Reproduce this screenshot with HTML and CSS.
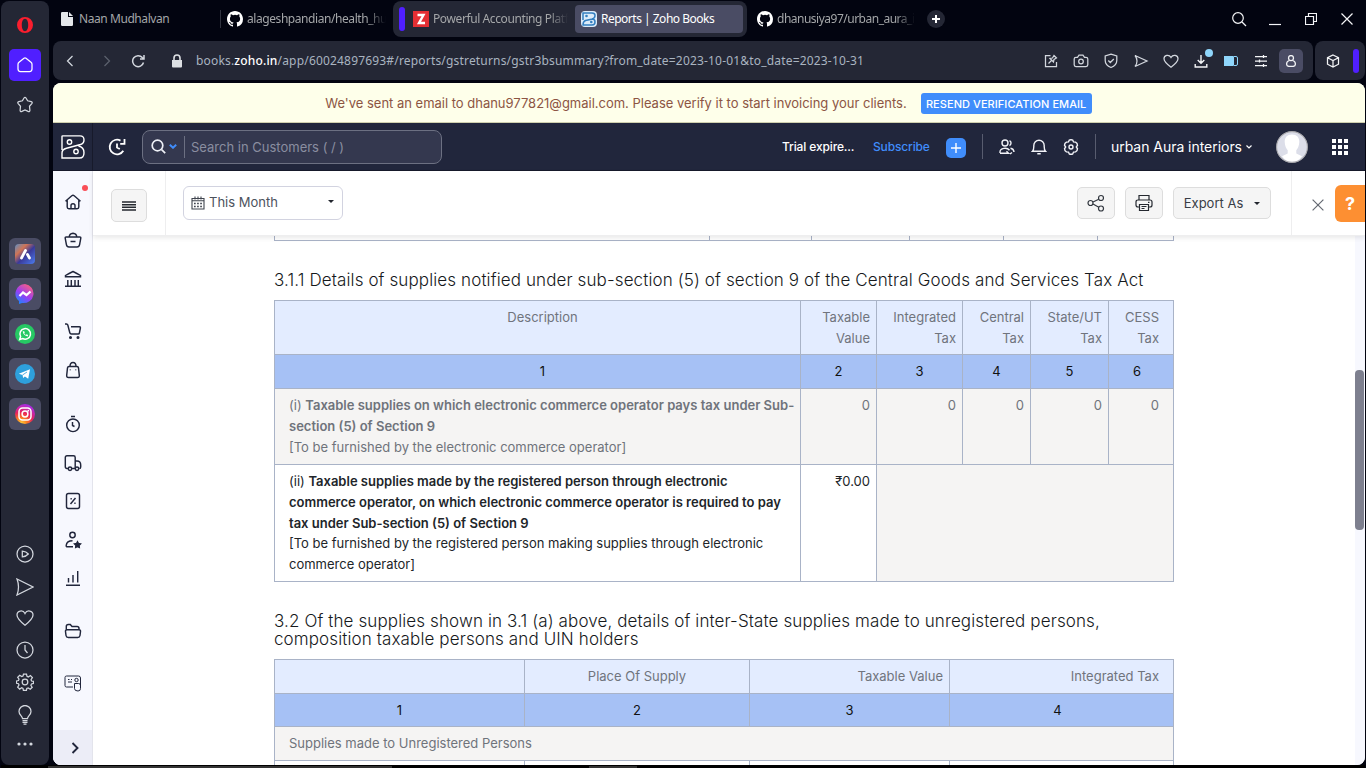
FILE: index.html
```html
<!DOCTYPE html>
<html lang="en">
<head>
<meta charset="utf-8">
<title>Reports | Zoho Books</title>
<link rel="stylesheet" href="styles.css">
</head>
<body>
<div class="browser">
  <aside class="rail">
    <span class="slot"><svg width="18" height="18" viewBox="0 0 18 18"><path fill="#fa1e2e" fill-rule="evenodd" d="M9 1a8 8 0 1 0 0 16A8 8 0 0 0 9 1zm0 1.800c2 0 3.200 2.800 3.200 6.200s-1.200 6.200-3.200 6.200S5.800 12.400 5.800 9 7 2.800 9 2.800z"/></svg></span>
    <span class="slot"><span class="rail-home"><svg class="ic" width="18" height="18" viewBox="0 0 18 18"><path d="M2 8.200Q2 7 3 6.200L8 2.200q1-.8 2 0l5 4q1 .8 1 2V13q0 2.500-2.500 2.500h-9Q2 15.500 2 13z"/></svg></span></span>
    <span class="slot"><svg class="ic" width="18" height="18" viewBox="0 0 18 18"><path d="M8 2q1-1.500 2 0l1.600 2.800 3.600.8q1.700.5.600 2L13.500 10.300l.4 3.900q0 1.900-1.800 1.200L9 14l-3.100 1.400q-1.800.7-1.800-1.200l.4-3.900L2.200 7.600q-1.100-1.500.6-2l3.600-.8z"/></svg></span>
    <div class="rail-apps">
      <span class="slot"><span class="app"><svg width="20" height="20" viewBox="0 0 20 20"><defs><linearGradient id="aria" x1="0" y1="0" x2="1" y2="1"><stop offset="0" stop-color="#5d8fc4"/><stop offset=".3" stop-color="#d07455"/><stop offset=".55" stop-color="#3a3a99"/><stop offset="1" stop-color="#4c7df0"/></linearGradient></defs><rect width="20" height="20" rx="4" fill="url(#aria)"/><path d="M6.500 14 10.500 6.500M12.500 10.500l2 3.500" stroke="#fff" stroke-width="2.800" stroke-linecap="round"/></svg></span></span>
      <span class="slot"><span class="app"><svg width="20" height="20" viewBox="0 0 20 20"><defs><linearGradient id="msg" x1=".2" y1="1" x2=".8" y2="0"><stop offset="0" stop-color="#1689ff"/><stop offset=".45" stop-color="#9a3df4"/><stop offset="1" stop-color="#ff6178"/></linearGradient></defs><path fill="url(#msg)" d="M10 0a10 9.600 0 1 1-3 19l-3 1v-3A9.600 9.600 0 0 1 10 0z"/><path d="m4.500 12 3.500-3.500 3.500 2.500 4-3.500" fill="none" stroke="#fff" stroke-width="2.200"/></svg></span></span>
      <span class="slot"><span class="app"><svg width="20" height="20" viewBox="0 0 20 20"><circle cx="10" cy="10" r="10" fill="#26c964"/><path d="m4.700 15.500.9-3a5.300 5.300 0 1 1 2 2z" fill="none" stroke="#fff" stroke-width="1.500"/><path d="M7.700 7.300c.3 2.700 2.200 4.700 5 5.100l.4-1.400-1.500-.7-.8.7a4 4 0 0 1-1.600-1.700l.6-.8-.6-1.300z" fill="#fff"/></svg></span></span>
      <span class="slot"><span class="app"><svg width="20" height="20" viewBox="0 0 20 20"><circle cx="10" cy="10" r="10" fill="#2ea0dc"/><path fill="#fff" d="M3.800 9.800 15 5.300l-1.800 9.400-3.300-2.300-1.700 1.700-.7-3.200z"/><path d="m7.500 11 4.500-3" stroke="#2ea0dc" stroke-width=".8"/></svg></span></span>
      <span class="slot"><span class="app"><svg width="20" height="20" viewBox="0 0 20 20"><defs><radialGradient id="ig" cx=".3" cy="1" r="1"><stop offset="0" stop-color="#ffd93d"/><stop offset=".3" stop-color="#fb7d20"/><stop offset=".6" stop-color="#e8215c"/><stop offset="1" stop-color="#a92be2"/></radialGradient></defs><circle cx="10" cy="10" r="10" fill="url(#ig)"/><g fill="none" stroke="#fff" stroke-width="1.500"><rect x="4" y="4" width="12" height="12" rx="3.500"/><circle cx="10" cy="10" r="2.900"/></g><circle cx="13.300" cy="6.700" r=".9" fill="#fff"/></svg></span></span>
    </div>
    <div class="rail-tools">
      <span class="tool"><svg class="ic" width="18" height="18" viewBox="0 0 18 18"><circle cx="9" cy="9" r="8"/><path d="M6.300 6.200v5.600q4-.4 6-2.800-2-2.400-6-2.800z"/></svg></span>
      <span class="tool low"><svg class="ic" width="18" height="18" viewBox="0 0 18 18"><path d="m1 1 16 8-16 8q3-8 0-16z"/></svg></span>
      <span class="tool"><svg class="ic" width="18" height="18" viewBox="0 0 18 18"><path d="M9 16.200C5 13 1 9.800 1 6c0-4.500 6-5.500 8-1.500 2-4 8-3 8 1.500 0 3.800-4 7-8 10.200z"/></svg></span>
      <span class="tool"><svg class="ic" width="18" height="18" viewBox="0 0 18 18"><circle cx="9" cy="9" r="8"/><path d="M9 4v5l2.500 3"/></svg></span>
      <span class="tool"><svg class="ic" width="18" height="18" viewBox="0 0 18 18"><circle cx="9" cy="9" r="2.800"/><path d="M7.500 1h3l.5 2.400 1.300.6 2.100-1.400 2 2L15 6.700l.6 1.300 1.900.4v2l-2 .6-.6 1.300 1.300 2-2 2-2-1.400-1.400.6-.4 1.900h-3l-.4-2-1.300-.6-2 1.300-2-2L3 12l-.5-1.300-2-.4V8l2-.5L3 6.200 1.700 4.300l2-2 2 1.300L7 3z"/></svg></span>
      <span class="tool low"><svg class="ic" width="14" height="20" viewBox="0 0 14 20"><path d="M4.500 13.500C4.300 11 1 10 1 6.500a6 6 0 0 1 12 0c0 3.500-3.300 4.500-3.500 7zM4.500 15.500h5M4.500 17.300h5M5.500 19h3"/></svg></span>
      <span class="tool short"><svg width="16" height="4" viewBox="0 0 16 4"><g fill="#d3d7de"><circle cx="2" cy="2" r="1.600"/><circle cx="8" cy="2" r="1.600"/><circle cx="14" cy="2" r="1.600"/></g></svg></span>
    </div>
  </aside>

  <div class="window">
    <div class="tabs">
      <div class="tab tab-a"><svg width="12" height="14" viewBox="0 0 12 14"><path fill="#e4e7ea" d="M0 1.200Q0 0 1.200 0H7v5h5v7.800q0 1.200-1.200 1.200H1.200Q0 14 0 12.800zM8 0l4 4H8z"/></svg><span class="label">Naan Mudhalvan</span></div>
      <div class="tab tab-b"><svg width="16" height="16" viewBox="0 0 16 16"><path fill="#fff" d="M8 0C3.580 0 0 3.580 0 8c0 3.540 2.290 6.530 5.470 7.590.4.070.55-.17.55-.38 0-.19-.01-.82-.01-1.490-2.010.37-2.530-.49-2.690-.94-.09-.23-.48-.94-.82-1.130-.28-.15-.68-.52-.01-.53.63-.01 1.080.58 1.230.82.72 1.210 1.870.87 2.330.66.070-.52.280-.87.510-1.070-1.780-.2-3.640-.89-3.640-3.950 0-.87.310-1.590.82-2.150-.08-.2-.36-1.020.08-2.120 0 0 .67-.21 2.200.82a7.600 7.600 0 0 1 4 0c1.530-1.040 2.200-.82 2.200-.82.44 1.100.16 1.920.08 2.120.51.560.82 1.270.82 2.150 0 3.070-1.870 3.750-3.650 3.950.29.250.54.730.54 1.480 0 1.070-.01 1.930-.01 2.200 0 .210.150.460.55.380A8 8 0 0 0 16 8c0-4.420-3.580-8-8-8z"/></svg><span class="label fade">alageshpandian/health_hu</span></div>
      <div class="tab-group">
        <i class="group-mark"></i>
        <div class="tab tab-c"><svg width="16" height="16" viewBox="0 0 16 16"><path fill="#e42f34" d="M0 0h16v16H0z"/><path fill="none" stroke="#fff" stroke-width="2.400" d="M4.500 4h6L6 12h6"/></svg><span class="label fade">Powerful Accounting Platf</span></div>
        <div class="tab tab-d"><svg width="16" height="16" viewBox="0 0 16 16"><rect width="16" height="16" rx="4" fill="#dcecfa"/><path fill="none" stroke="#347fc0" stroke-width="1.500" d="M2 9V2h9q3 0 3 2.500T11.500 8L4.500 9.500Q2 10.500 2 14h9q3 0 3-3t-3-3"/><circle cx="5.500" cy="5" r="1.300" fill="#347fc0"/><circle cx="10.300" cy="11" r="1.300" fill="#347fc0"/></svg><span class="label">Reports | Zoho Books</span></div>
      </div>
      <div class="tab tab-e"><svg width="16" height="16" viewBox="0 0 16 16"><path fill="#fff" d="M8 0C3.580 0 0 3.580 0 8c0 3.540 2.290 6.530 5.470 7.590.4.070.55-.17.55-.38 0-.19-.01-.82-.01-1.490-2.010.37-2.530-.49-2.690-.94-.09-.23-.48-.94-.82-1.130-.28-.15-.68-.52-.01-.53.63-.01 1.080.58 1.230.82.72 1.210 1.870.87 2.330.66.070-.52.280-.87.510-1.070-1.780-.2-3.640-.89-3.640-3.950 0-.87.310-1.590.82-2.150-.08-.2-.36-1.020.08-2.120 0 0 .67-.21 2.200.82a7.600 7.600 0 0 1 4 0c1.530-1.040 2.200-.82 2.200-.82.44 1.100.16 1.920.08 2.120.51.560.82 1.270.82 2.150 0 3.070-1.870 3.750-3.650 3.950.29.250.54.730.54 1.480 0 1.070-.01 1.930-.01 2.200 0 .210.150.460.55.380A8 8 0 0 0 16 8c0-4.420-3.580-8-8-8z"/></svg><span class="label fade">dhanusiya97/urban_aura_i</span></div>
      <span class="new-tab"><svg width="10" height="10" viewBox="0 0 10 10"><path d="M5 1v8M1 5h8" stroke="#fff" stroke-width="2"/></svg></span>
      <div class="win-controls">
        <svg class="ic lite" width="16" height="16" viewBox="0 0 16 16"><circle cx="7" cy="7" r="5.300"/><path d="m11 11 4 4"/></svg>
        <svg class="ic lite" width="12" height="14" viewBox="0 0 12 14"><path d="M0 12.500h12"/></svg>
        <svg class="ic lite" width="12" height="12" viewBox="0 0 12 12"><path d="M.5 3.500h8v8h-8zM3.500 3.500v-3h8v8h-3"/></svg>
        <svg class="ic lite" width="12" height="12" viewBox="0 0 12 12"><path d="m.5.500 11 11M11.500.5l-11 11"/></svg>
      </div>
    </div>

    <div class="bar-row">
      <div class="address">
        <svg class="ic back" width="8" height="12" viewBox="0 0 8 12"><path d="M6.500 1 1.500 6l5 5"/></svg>
        <svg class="ic dim forward" width="8" height="12" viewBox="0 0 8 12"><path d="m1.500 1 5 5-5 5"/></svg>
        <svg class="ic reload" width="14" height="14" viewBox="0 0 14 14"><path stroke-width="1.500" d="M12.500 8.500A5.500 5.500 0 1 1 11.300 3.500L13 5M13 1v4H9"/></svg>
        <svg class="lock" width="10" height="14" viewBox="0 0 10 14"><path fill="#dcdfe3" d="M0 6h10v6.500q0 1-1 1H1q-1 0-1-1z"/><path fill="none" stroke="#dcdfe3" stroke-width="1.600" d="M2 6V4a3 3 0 0 1 6 0v2"/></svg>
        <span class="url">books.<b>zoho.in</b>/app/60024897693#/reports/gstreturns/gstr3bsummary?from_date=2023-10-01&amp;to_date=2023-10-31</span>
        <div class="ext">
          <svg class="ic" width="14" height="14" viewBox="0 0 14 14"><path d="M6.500 1.500H1.500v11h11V8M4.500 9.500l3-3M6 4.500l3.500 3.500.5-2.500L12.500 4 10 1.500 8.500 4z"/></svg>
          <svg class="ic" width="16" height="14" viewBox="0 0 16 14"><path d="M1.200 5q0-1.700 1.700-1.700h1.600L6 1.200h4l1.500 2.100H13q1.800 0 1.800 1.700v5.800q0 1.700-1.800 1.700H2.900q-1.700 0-1.700-1.700z"/><circle cx="8" cy="7.500" r="2.300"/></svg>
          <svg class="ic" width="14" height="16" viewBox="0 0 14 16"><path d="M7 1.200 12.800 3v4.500c0 4-2.800 5.800-5.800 7-3-1.200-5.800-3-5.800-7V3zM4.300 7.500l2 2 3.500-3.500"/></svg>
          <svg class="ic" width="14" height="14" viewBox="0 0 14 14"><path d="m1 1.500 12 5.500-12 5.500q2-2.500 2-5.500t-2-5.500z"/></svg>
          <svg class="ic" width="16" height="14" viewBox="0 0 16 14"><path d="M8 13.200C4.500 10.500 1 8 1 4.800 1 1 6 0 8 3.500 10 0 15 1 15 4.800 15 8 11.500 10.500 8 13.200z"/></svg>
          <span class="dl"><svg class="ic lite" width="14" height="14" viewBox="0 0 14 14"><path stroke-width="1.400" d="M7 1v8M3.700 6 7 9.300 10.300 6M1.200 10v3h11.600v-3"/></svg><i class="dot"></i></span>
          <svg width="14" height="10" viewBox="0 0 14 10"><path fill="#8fd6fb" d="M0 0h9q1 0 1 1v8q0 1-1 1H0z"/><path fill="none" stroke="#8fd6fb" d="M10 .5h2q1.500 0 1.500 1.500v6q0 1.500-1.500 1.500h-2"/></svg>
          <svg class="ic lite" width="12" height="12" viewBox="0 0 12 12"><path d="M0 1.500h12M0 6h12M0 10.500h12M8.500 0v3M4.500 4.500v3M8.500 9v3"/></svg>
          <span class="profile"><svg class="ic lite" width="10" height="12" viewBox="0 0 10 12"><circle cx="5" cy="3" r="2.500"/><path d="M3.500 5.500C1.500 6 .6 7.500.6 9q0 2.400 2.400 2.400h4q2.400 0 2.400-2.400c0-1.500-.9-3-2.900-3.500"/></svg></span>
        </div>
      </div>
      <div class="side-panel"><svg class="ic lite" width="14" height="14" viewBox="0 0 14 14"><path d="m7 1 5.500 2.700v6.500L7 13l-5.500-2.800V3.700zM1.500 3.700 7 6.500l5.500-2.800M7 6.500V13"/></svg><i class="panel-mark"></i></div>
    </div>

    <main class="page">
      <div class="banner"><span class="banner-text">We've sent an email to dhanu977821@gmail.com. Please verify it to start invoicing your clients.</span><button class="resend">RESEND VERIFICATION EMAIL</button></div>
      <header class="topbar">
        <span class="logo"><svg width="24" height="24" viewBox="0 0 24 24"><g fill="none" stroke="#fff" stroke-width="1.400"><path d="M1 15V1.500q0-.6.600-.6H19q4 0 4 4 0 3.500-3.500 4.600L5.500 13.300Q1 14.500 1 18v5h17.500q4.500 0 4.500-5.300 0-5.500-5.500-6.700"/><circle cx="8.500" cy="7" r="2.200"/><circle cx="15" cy="16.500" r="2.200"/></g></svg></span>
        <span class="history"><svg width="18" height="18" viewBox="0 0 18 18"><path fill="none" stroke="#fff" stroke-width="1.800" d="M15.300 12.700A7.300 7.300 0 1 1 12.500 2.600M16.500 1v4.800h-4.300M9 5.500v4l2.800 1.500"/></svg></span>
        <div class="search"><svg width="15" height="15" viewBox="0 0 15 15"><g fill="none" stroke="#eef0f6" stroke-width="1.700"><circle cx="6.500" cy="6.500" r="5.300"/><path d="m10.600 10.600 3.600 3.600"/></g></svg><svg width="8" height="5" viewBox="0 0 8 5"><path d="m.8.800 3.200 3 3.200-3" fill="none" stroke="#408dfb" stroke-width="1.900"/></svg><span class="search-text">Search in Customers ( / )</span></div>
        <span class="trial">Trial expire...</span>
        <span class="subscribe">Subscribe</span>
        <span class="plus"><svg width="10" height="10" viewBox="0 0 10 10"><path d="M5 0v10M0 5h10" stroke="#fff" stroke-width="1.400"/></svg></span>
        <div class="top-icons">
          <svg width="16" height="16" viewBox="0 0 16 16"><g fill="none" stroke="#f1f2f7" stroke-width="1.400"><circle cx="6" cy="4" r="3"/><path d="M10.500 1.500a2.800 2.800 0 0 1 0 5M1 14v-1c0-4 7-5 9.500-1.800M1 14.300h8.500l-2-2M11.500 9.300c2 .3 3.300 1.500 3.500 3.700M11 15l2-1.500"/></g></svg>
          <svg width="16" height="16" viewBox="0 0 16 16"><path fill="none" stroke="#f1f2f7" stroke-width="1.400" d="M1.500 12.300c1.500-1.300 1.300-2.800 1.300-5.800a5.200 5.200 0 0 1 10.400 0c0 3-.2 4.500 1.300 5.800zM6.300 14.800h3.400"/></svg>
          <svg width="16" height="16" viewBox="0 0 16 16"><g fill="none" stroke="#f1f2f7" stroke-width="1.400"><circle cx="8" cy="8" r="2"/><path d="M6.200 1.200q1.800-1 3.600 0l.7 1.700 2 .2q2 1 2 3.100L13.300 8l1.200 1.800q0 2-2 3.100l-2 .2-.7 1.700q-1.800 1-3.600 0l-.7-1.700-2-.2q-2-1-2-3.100L2.700 8 1.500 6.200q0-2 2-3.100l2-.2z"/></g></svg>
        </div>
        <div class="org">urban Aura interiors<svg width="6" height="4" viewBox="0 0 6 4"><path d="m.5.500 2.500 2.500L5.500.5" fill="none" stroke="#fff" stroke-width="1.200"/></svg></div>
        <svg class="avatar" width="32" height="32" viewBox="0 0 32 32"><circle cx="16" cy="16" r="15.500" fill="#dcdee9"/><path fill="#fff" d="M16 3.500c4.800 0 7.500 3 7.300 7.500-.2 4-1.500 6.500-3 8.200v3.300l5.700 2.700q-4 5.500-10 5.500T6 25.200l5.700-2.700v-3.300c-1.500-1.700-2.800-4.200-3-8.200C8.500 6.500 11.200 3.500 16 3.500z"/><circle cx="16" cy="16" r="15.400" fill="none" stroke="#a9a9ad" stroke-width="1.100"/></svg>
        <svg class="apps" width="16" height="16" viewBox="0 0 16 16"><path fill="#fff" d="M0 0h4v4H0zM6 0h4v4H6zM12 0h4v4h-4zM0 6h4v4H0zM6 6h4v4H6zM12 6h4v4h-4zM0 12h4v4H0zM6 12h4v4H6zM12 12h4v4h-4z"/></svg>
      </header>

      <div class="body">
        <nav class="nav">
          <div class="nav-group">
            <span class="nav-item"><svg width="18" height="18" viewBox="0 0 18 18"><path d="M1.500 8.200 7.800 2.800q1.200-1 2.400 0l6.300 5.400M3.200 7v7q0 1.700 1.700 1.700h8.200q1.700 0 1.700-1.700V7M7 15.500v-3q0-1.800 2-1.800t2 1.800v3"/></svg><i class="alert"></i></span>
            <span class="nav-item"><svg width="18" height="18" viewBox="0 0 18 18"><path d="M2.200 6h13.600q1.200 0 1 1.200l-1.200 6.500q-.4 2.300-2.600 2.300H5q-2.200 0-2.600-2.300L1.200 7.200Q1 6 2.200 6zM5.200 6q.2-3.500 3.800-3.800Q12.600 2.500 12.800 6M6.500 10.500h5"/></svg></span>
            <span class="nav-item"><svg width="18" height="18" viewBox="0 0 18 18"><path d="M1.500 5.500Q5 3.300 9 1.500q4 1.800 7.500 4v1.200h-15zM1 16.200h16M3.800 10v6M7.300 10v6M11 10v6M14.300 10v6"/></svg></span>
          </div>
          <div class="nav-group">
            <span class="nav-item"><svg width="18" height="18" viewBox="0 0 18 18"><path d="M1 2h1.500q1 0 1.300 1l2 7.800q.3 1.200 1.500 1.200h6.900q1 0 1.200-1l1-5q.2-1.300-1-1.300H7"/><circle cx="6.500" cy="15.500" r=".8"/><circle cx="14" cy="15.500" r=".8"/></svg></span>
            <span class="nav-item"><svg width="18" height="18" viewBox="0 0 18 18"><path d="M5 5.500h8q1.300 0 1.500 1.300l.8 7.500q.2 2.200-1.800 2.200h-9q-2 0-1.800-2.200l.8-7.500Q3.700 5.500 5 5.500zM6 5.500q0-4 3-4t3 4"/><path d="M6.300 8.500v.8M11.700 8.500v.8"/></svg></span>
          </div>
          <div class="nav-group wide">
            <span class="nav-item"><svg width="18" height="18" viewBox="0 0 18 18"><circle cx="9" cy="10.300" r="6.300"/><path d="M7 1.500h4M8.500 7v3.500l2 1"/></svg></span>
            <span class="nav-item"><svg width="18" height="18" viewBox="0 0 18 18"><path d="M4 14.500H3q-1.700 0-1.700-1.700V3.500q0-1.700 1.700-1.700h6.500q1.700 0 1.700 1.700v11H7.800M11.200 7H13q3.700 0 3.700 4v2q0 1.500-1.400 1.500"/><circle cx="6" cy="14.700" r="1.700"/><circle cx="13" cy="14.700" r="1.700"/></svg></span>
            <span class="nav-item"><svg width="18" height="18" viewBox="0 0 18 18"><rect x="2.500" y="1.500" width="13" height="15" rx="2"/><path d="m11.500 6-5 6M6.500 6.800h1.300M10.300 11.200h1.300"/></svg></span>
            <span class="nav-item"><svg width="18" height="18" viewBox="0 0 18 18"><circle cx="8.500" cy="4" r="2.700"/><path d="M9 15.800H3.500q-1.500 0-1.300-1.500.5-4.500 6.300-4.500"/><path fill="#21263c" d="m13.500 10.800 1 1.700 2 .4-1.400 1.400.2 2-1.800-.8-1.800.8.200-2-1.400-1.400 2-.4z"/></svg></span>
            <span class="nav-item"><svg width="18" height="18" viewBox="0 0 18 18"><path d="M2 16.200h14M4.500 9v4.500M9 6v7.500M13.700 2v11.500"/></svg></span>
          </div>
          <div class="nav-group"><span class="nav-item"><svg width="18" height="18" viewBox="0 0 18 18"><path d="M2.300 8V4.500q0-2 2-2h2L8 4.500h5q2 0 2 2V8M3 7.800h12q1.700 0 1.500 1.700l-.5 4q-.3 2-2.300 2H4.300q-2 0-2.300-2l-.5-4Q1.300 7.800 3 7.800z"/></svg></span></div>
          <div class="nav-group"><span class="nav-item"><svg class="thin" width="18" height="18" viewBox="0 0 18 18"><path d="M9 13H2.500Q1 13 1 11.500v-8Q1 2 2.500 2h12Q16.500 2 16.500 4v9M4 5.500h1.500M7 5.500h1M4 8h4"/><circle cx="12.500" cy="6" r="1.700"/><path d="M10.500 9.500h4q2 0 2 2v3q0 2.500-2.500 2.500-3.500 0-3.500-2.500z"/></svg></span></div>
          <span class="nav-more"><svg width="8" height="12" viewBox="0 0 8 12"><path d="m1.500 1 5 5-5 5"/></svg></span>
        </nav>

        <section class="report">
          <div class="toolbar">
            <div class="menu-cell"><button class="btn menu"><svg width="14" height="10" viewBox="0 0 14 10"><path d="M0 1h14M0 3.700h14M0 6.300h14M0 9h14" stroke="#24282f" stroke-width="1.400"/></svg></button></div>
            <div class="period"><svg width="14" height="14" viewBox="0 0 14 14"><path d="M1 2.500h12v10.500H1zM1 4.700h12M4 .5v3M7 .5v3M10 .5v3" fill="none" stroke="#3f444e" stroke-width="1.100"/><path d="M3 7.500h8M3 10.500h8" stroke="#3f444e" stroke-width="1.700" stroke-dasharray="1.700 1.400"/></svg><span class="period-text">This Month</span><i class="caret"></i></div>
            <button class="btn square share"><svg width="18" height="18" viewBox="0 0 18 18"><g fill="none" stroke="#333840" stroke-width="1.200"><circle cx="3.500" cy="9" r="2.500"/><circle cx="14" cy="4" r="2.500"/><circle cx="14" cy="14.500" r="2.500"/><path d="m6 8 5.800-2.800M6 10l5.800 3.200"/></g></svg></button>
            <button class="btn square"><svg width="18" height="18" viewBox="0 0 18 18"><g fill="none" stroke="#24282f" stroke-width="1.200"><path d="M4 5.500v-4h10v4M4 13H3q-2 0-2-2V8q0-2 2-2h12q2 0 2 2v3q0 2-2 2h-1M4.500 10.500h9v6h-9zM6.500 12.500h5M6.500 14.500h3M13 8.300h1.500"/></g></svg></button>
            <button class="btn export"><span>Export As</span><i class="caret"></i></button>
            <div class="close-cell"><svg width="12" height="12" viewBox="0 0 12 12"><path d="m.6.600 10.800 10.800M11.400.6.600 11.400" stroke="#666b74" stroke-width="1.200"/></svg></div>
            <span class="help">?</span>
          </div>
          <div class="scroller">
            <div class="doc">
              <table class="grid tail"><colgroup><col class="w435"><col class="w102"><col class="w98"><col class="w94"><col class="w94"><col></colgroup><tr><td></td><td></td><td></td><td></td><td></td><td></td></tr></table>
              <h4 class="title one">3.1.1 Details of supplies notified under sub-section (5) of section 9 of the Central Goods and Services Tax Act</h4>
              <table class="grid supplies">
                <colgroup><col class="w526"><col class="w76"><col class="w86"><col class="w68"><col class="w78"><col></colgroup>
                <tr class="head h54"><th class="mid">Description</th><th>Taxable Value</th><th>Integrated Tax</th><th>Central Tax</th><th>State/UT Tax</th><th>CESS Tax</th></tr>
                <tr class="index h34"><td>1</td><td>2</td><td>3</td><td>4</td><td>5</td><td>6</td></tr>
                <tr class="muted h76"><td>(i) <b>Taxable supplies on which electronic commerce operator pays tax under Sub-section (5) of Section 9</b><br>[To be furnished by the electronic commerce operator]</td><td>0</td><td>0</td><td>0</td><td>0</td><td>0</td></tr>
                <tr class="h117"><td>(ii) <b>Taxable supplies made by the registered person through electronic commerce operator, on which electronic commerce operator is required to pay tax under Sub-section (5) of Section 9</b><br>[To be furnished by the registered person making supplies through electronic commerce operator]</td><td>₹0.00</td><td colspan="4" class="blank"></td></tr>
              </table>
              <h4 class="title two">3.2 Of the supplies shown in 3.1 (a) above, details of inter-State supplies made to unregistered persons, composition taxable persons and UIN holders</h4>
              <table class="grid places">
                <colgroup><col class="w250"><col class="w225"><col class="w200"><col></colgroup>
                <tr class="head h34"><th></th><th class="mid">Place Of Supply</th><th>Taxable Value</th><th>Integrated Tax</th></tr>
                <tr class="index h33"><td>1</td><td>2</td><td>3</td><td>4</td></tr>
                <tr class="muted h34"><td colspan="4">Supplies made to Unregistered Persons</td></tr>
                <tr class="h34"><td></td><td></td><td></td><td></td></tr>
              </table>
            </div>
            <div class="track"><i class="thumb"></i></div>
          </div>
        </section>
      </div>
    </main>
  </div>
  <footer class="edge"><i class="seg-a"></i><i class="seg-b"></i></footer>
</div>
</body>
</html>
```
FILE: styles.css
```css
* { box-sizing: border-box; }
body { margin: 0; background: #020410; font-family: Inter, "Liberation Sans", sans-serif; font-size: 13px; }
button { font-family: inherit; padding: 0; }
svg { display: block; flex: none; }
i { display: block; }

.browser { width: 1366px; height: 768px; overflow: hidden; display: grid; grid-template-columns: 48px 1312px; grid-template-rows: 765px 3px; column-gap: 4px; padding-left: 1px; }
.ic { fill: none; stroke: #d3d7de; stroke-width: 1.25; }
.ic.dim { stroke: #5c606d; }
.ic.lite { stroke: #f4f5f7; }

.rail { margin-top: 1px; background: #242735; border-radius: 8px; padding-top: 4px; }
.slot { height: 40px; display: flex; align-items: center; justify-content: center; }
.rail-home { width: 32px; height: 32px; border-radius: 5px; background: #501fff; display: grid; place-items: center; }
.rail-home .ic { stroke: #fff; }
.rail-apps { margin-top: 109px; }
.app { width: 32px; height: 32px; border-radius: 6px; background: #4a4c64; display: grid; place-items: center; }
.rail-tools { margin-top: 104px; }
.tool { height: 32px; display: flex; align-items: center; justify-content: center; }
.tool.low { padding-top: 2px; }
.tool.short { height: 28px; }

.window { display: flex; flex-direction: column; }
.tabs { height: 41px; display: flex; align-items: center; font-family: "Noto Sans", sans-serif; font-size: 12px; letter-spacing: -0.43px; color: #a4a6a8; padding-bottom: 3px; }
.tab { display: flex; align-items: center; height: 28px; }
.label { white-space: nowrap; overflow: hidden; line-height: 18px; flex: 1; min-width: 0; }
.fade { -webkit-mask-image: linear-gradient(90deg, #000 86%, transparent 100%); mask-image: linear-gradient(90deg, #000 86%, transparent 100%); }
.tab-a { width: 167px; padding-left: 8px; gap: 6px; }
.tab-b { width: 166px; height: 18px; padding-left: 6px; gap: 4px; border-left: 1px solid #30333f; }
.tab-group { width: 354px; height: 36px; margin: 0 0 0 7px; background: #242735; border-radius: 8px; display: flex; align-items: center; padding-left: 6px; }
.group-mark { width: 6px; height: 24px; border-radius: 3px; background: #501fff; margin-right: 8px; }
.tab-c { width: 155px; gap: 4px; }
.tab-c .label { letter-spacing: -0.4px; }
.tab-d { width: 168px; padding-left: 6px; gap: 4px; background: #4a4c64; border-radius: 4px; color: #fff; margin-left: 7px; letter-spacing: -0.5px; }
.tab-e { width: 158px; gap: 4px; margin-left: 10px; letter-spacing: -0.5px; }
.new-tab { width: 18px; height: 18px; border-radius: 50%; background: #242735; display: grid; place-items: center; margin-left: 12px; }
.win-controls { margin-left: auto; display: flex; align-items: center; gap: 24px; padding-right: 12px; }
.win-controls .ic { stroke-width: 1.2; }
.win-controls .ic:first-child { margin-right: -2px; }

.bar-row { display: flex; gap: 2px; height: 39px; margin-bottom: 3px; }
.address { width: 1260px; background: #242735; border-radius: 8px; display: flex; align-items: center; padding-left: 13px; }
.back { margin-right: 29px; }
.forward { margin-right: 20px; }
.reload { margin-right: 27px; }
.url { margin-left: 14px; font-family: "Noto Sans", sans-serif; font-size: 12px; letter-spacing: .18px; color: #a9b4c0; white-space: nowrap; }
.url b { font-weight: 500; color: #fff; }
.ext { margin-left: auto; display: flex; align-items: center; padding-right: 7px; }
.ext > svg { width: 30px; }
.dl { position: relative; width: 30px; display: grid; place-items: center; }
.dot { position: absolute; right: 3px; top: -5px; width: 8px; height: 8px; border-radius: 50%; background: #8fd6fb; }
.profile { width: 24px; height: 24px; border-radius: 5px; background: #4a4c64; display: grid; place-items: center; margin: 0 3px; }
.side-panel { width: 50px; background: #242735; border-radius: 8px; display: flex; align-items: center; padding-left: 11px; }
.panel-mark { width: 6px; height: 24px; border-radius: 3px; background: #501fff; margin-left: 13px; }

.page { height: 682px; border-radius: 8px; overflow: hidden; background: #fff; }
.banner { height: 40px; background: #feffea; border-bottom: 1px solid #cfcfae; display: flex; align-items: center; justify-content: center; gap: 14px; color: #8c5543; padding: 2px 1px 0 0; }
.banner-text { font-size: 13px; letter-spacing: -.01px; padding-bottom: 1px; }
.resend { width: 171px; height: 21px; border: 0; border-radius: 3px; background: #408dfb; color: #fff; font-size: 11px; font-weight: 500; letter-spacing: .06px; }
.topbar { height: 48px; background: #21263c; border-bottom: 1px solid #171a2b; display: flex; align-items: center; color: #fff; }
.logo { width: 40px; height: 47px; border-right: 1px solid #171a2b; display: grid; place-items: center; }
.history { margin-left: 15px; }
.search { margin-left: 16px; width: 300px; height: 34px; border: 1px solid #6c7082; border-radius: 8px; background: #34384f; display: flex; align-items: center; padding-left: 8px; }
.search svg + svg { margin-left: 3px; }
.search-text { margin-left: 7px; height: 22px; line-height: 22px; border-left: 1px solid #6c7082; padding-left: 6px; color: #8a8ea0; }
.trial { margin-left: 340px; font-size: 12px; font-weight: 500; letter-spacing: -.13px; width: 91px; }
.subscribe { font-size: 12px; font-weight: 500; letter-spacing: -.15px; color: #408dfb; width: 73px; }
.plus { width: 20px; height: 20px; border-radius: 5px; background: #408dfb; display: grid; place-items: center; margin-top: 2px; }
.top-icons { margin-left: 16px; height: 25px; width: 114px; border: solid #585c6f; border-width: 0 1px; display: flex; align-items: center; padding-left: 16px; gap: 16px; }
.org { margin-left: 15px; font-size: 14px; letter-spacing: -.04px; display: flex; align-items: center; gap: 4px; width: 165px; white-space: nowrap; }
.apps { margin-left: 24px; }

.body { display: flex; height: 594px; }
.nav { width: 40px; background: #f7f8fe; border-right: 1px solid #e3e4ec; padding-top: 11.500px; display: flex; flex-direction: column; gap: 14px; }
.nav-group.wide { margin-top: 1.800px; }
.nav-item { height: 38.500px; display: flex; align-items: center; justify-content: center; position: relative; }
.nav svg { fill: none; stroke: #21263c; stroke-width: 1.450; }
.nav svg.thin { stroke-width: 1; }
.alert { position: absolute; left: 29px; top: 2px; width: 6px; height: 6px; border-radius: 50%; background: #f94e57; }
.nav-more { margin-top: auto; height: 35px; background: #ecedf7; display: flex; align-items: center; justify-content: center; padding-left: 4px; }
.nav .nav-more svg { stroke-width: 1.900; }

.report { width: 1272px; display: flex; flex-direction: column; }
.toolbar { height: 65px; background: #fff; display: flex; align-items: center; border-bottom: 1px solid #eeeeef; box-shadow: 0 2px 5px rgba(0,0,0,.09); position: relative; }
.menu-cell { width: 73px; height: 64px; border-right: 1px solid #eeeeef; padding: 18px 0 0 18px; }
.btn { border: 1px solid #dddddd; border-radius: 5px; background: #f5f5f5; display: flex; align-items: center; justify-content: center; color: #383d46; font-size: 13px; }
.menu { width: 36px; height: 33px; }
.period { width: 160px; height: 34px; margin: 0 0 1px 17px; border: 1px solid #d2d3e0; border-radius: 6px; display: flex; align-items: center; padding: 0 8px 0 7px; color: #4c525c; }
.period-text { margin: 0 auto 1px 4px; }
.caret { width: 0; height: 0; border: solid transparent; border-width: 3.500px 3px 0; border-top-color: #22262e; }
.period .caret { margin-bottom: 2px; }
.square { width: 38px; height: 32px; margin-right: 10px; }
.share { margin-left: 734px; }
.export { width: 98px; height: 32px; gap: 11px; }
.close-cell { margin-left: 20px; height: 64px; border-left: 1px solid #eeeeef; width: 44px; display: flex; align-items: center; padding: 4px 0 0 20px; }
.help { width: 30px; height: 37px; background: #fd8f32; border-radius: 6px 0 0 6px; color: #fff; font-weight: 700; font-size: 18px; display: grid; place-items: center; }
.scroller { flex: 1; overflow: hidden; display: flex; justify-content: space-between; }
.doc { padding-left: 181px; width: 1081px; color: #212529; }
.track { width: 10px; background: #f7f8fe; padding: 134px 1px 0 0; }
.thumb { height: 160px; border-radius: 4px; background: #7e808f; }

.grid { border-collapse: collapse; table-layout: fixed; width: 900px; line-height: 20.800px; }
.grid td, .grid th { border: 1px solid #a9b3c7; padding: 6px; vertical-align: top; text-align: right; font-weight: 400; }
.grid td:first-child, .grid th:first-child { padding-left: 14px; padding-right: 4px; text-align: left; }
.grid td:last-child, .grid th:last-child { padding-right: 14px; }
.grid.tail td { height: 24px; padding: 0; }
.tail { margin-top: -20px; }
.grid .head { background: #e3ecff; color: #70747d; }
.grid .head th { padding-bottom: 5px; }
.grid .head .mid, .grid .index td, .grid .index td:first-child { text-align: center; }
.grid.places .index td { padding-bottom: 5px; }
.grid.places .index td:first-child { padding: 6px 6px 5px; }
.grid .index { background: #a6c1f5; color: #111; }
.grid .muted { background: #f5f4f3; color: #6f737b; }
.grid .blank { background: #f5f4f3; }
.grid b { font-weight: 600; }
.title { margin: 0; font-weight: 300; font-size: 17px; letter-spacing: .113px; line-height: 18px; color: #16191c; }
.title.one { margin-top: 30px; height: 29px; white-space: nowrap; }
.title.two { margin-top: 30px; height: 47px; }
.h33 { height: 33px; } .h34 { height: 34px; } .h54 { height: 54px; } .h76 { height: 76px; } .h117 { height: 117px; }
.w435 { width: 435px; } .w102 { width: 102px; } .w98 { width: 98px; } .w94 { width: 94px; }
.w526 { width: 526px; } .w76 { width: 76px; } .w86 { width: 86px; } .w68 { width: 68px; } .w78 { width: 78px; }
.w250 { width: 250px; } .w225 { width: 225px; } .w200 { width: 200px; }

.edge { grid-column: 1 / -1; background: #000; display: flex; padding: 1px 0 0 47px; }
.seg-a { width: 344px; background: #333; }
.seg-b { width: 48px; background: #333; margin-left: 197px; }
```
